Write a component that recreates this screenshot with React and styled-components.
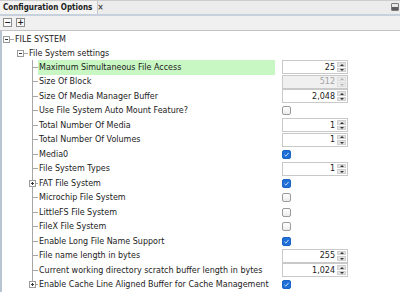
import React from 'react';
import styled, { createGlobalStyle, css } from 'styled-components';

const GlobalStyle = createGlobalStyle`
  html, body {
    margin: 0;
    padding: 0;
    background: #ffffff;
  }
  body {
    font-family: "DejaVu Sans", Verdana, sans-serif;
    font-size: 8px;
    color: #1b1b1b;
  }
`;

const Frame = styled.div`
  width: 400px;
  height: 292px;
  overflow: hidden;
  display: flex;
  flex-direction: column;
  background: #ffffff;
`;

const TabStrip = styled.div`
  height: 13px;
  display: flex;
  align-items: stretch;
  justify-content: space-between;
  background: #ececec;
  border-top: 1px solid #cdcdcd;
  border-bottom: 2px solid #c6d1dd;
`;

const Tab = styled.div`
  display: flex;
  align-items: center;
  gap: 5px;
  padding: 0 3px 0 3px;
  width: 91px;
  background: #f3f3f3;
  border-right: 1px solid #c8c8c8;
  font-family: "DejaVu Sans Condensed", "DejaVu Sans", sans-serif;
  font-weight: bold;
  font-size: 8px;
  color: #222;
  white-space: nowrap;
`;

const CloseMark = styled.span`
  font-size: 8px;
  font-weight: bold;
  color: #444;
`;

const WindowButton = styled.div`
  align-self: center;
  margin-right: 1px;
  width: 6px;
  height: 6px;
  border: 1px solid #7a7a7a;
  background: linear-gradient(#e8e8e8 0 55%, #5c5c5c 55% 100%);
  border-radius: 1px;
`;

const Toolbar = styled.div`
  height: 15px;
  display: flex;
  align-items: center;
  gap: 4px;
  padding-left: 3px;
  background: #f0f0f0;
  border-bottom: 1px solid #c3c3c3;
`;

const ToolButton = styled.div`
  width: 7px;
  height: 7px;
  border: 1px solid #8c8c8c;
  background: #fafafa;
  display: flex;
  align-items: center;
  justify-content: center;
  font-size: 8px;
  line-height: 1;
  font-weight: bold;
  color: #222;
`;

const TreePanel = styled.div`
  flex: 1;
  border-left: 2px solid #b7c5d3;
  padding-top: 2px;
  display: flex;
  flex-direction: column;
`;

const GroupRow = styled.div`
  height: 13.5px;
  display: flex;
  align-items: center;
  padding-left: ${(p) => p.indent}px;
  white-space: nowrap;
`;

const ExpandBox = styled.span`
  box-sizing: border-box;
  width: 7px;
  height: 7px;
  border: 1px solid #9a9a9a;
  background: #ffffff;
  position: relative;
  flex: none;
  &::before {
    content: '';
    position: absolute;
    left: 1px;
    top: 2px;
    width: 3px;
    height: 1px;
    background: #333;
  }
  ${(p) =>
    p.closed &&
    css`
      &::after {
        content: '';
        position: absolute;
        left: 2px;
        top: 1px;
        width: 1px;
        height: 3px;
        background: #333;
      }
    `}
`;

const Dash = styled.span`
  width: 4px;
  height: 1px;
  background: #a6a6a6;
  margin-right: 1px;
  flex: none;
`;

const Row = styled.div`
  height: 14.5px;
  display: grid;
  grid-template-columns: 36px 237px 7px 1fr;
  align-items: stretch;
`;

const Branch = styled.div`
  position: relative;
  background:
    linear-gradient(#a6a6a6, #a6a6a6) 30px 0 / 1px ${(p) => (p.last ? '50%' : '100%')} no-repeat,
    linear-gradient(#a6a6a6, #a6a6a6) 30px 50% / 6px 1px no-repeat;
  display: flex;
  align-items: center;
  padding-left: 27px;
`;

const Label = styled.div`
  display: flex;
  align-items: center;
  padding-left: 1px;
  white-space: nowrap;
  background: ${(p) => (p.highlight ? '#c9f7c4' : 'transparent')};
`;

const ValueCell = styled.div`
  display: flex;
  align-items: center;
`;

const Spinner = styled.div`
  box-sizing: border-box;
  width: 66px;
  height: 14px;
  display: flex;
  border: 1px solid #c9c9c9;
  background: ${(p) => (p.disabled ? '#f0f0f0' : '#ffffff')};
`;

const SpinValue = styled.div`
  flex: 1;
  display: flex;
  align-items: center;
  justify-content: flex-end;
  padding-right: 2px;
  color: ${(p) => (p.disabled ? '#a3a3a3' : '#1b1b1b')};
`;

const SpinButtons = styled.div`
  width: 9px;
  margin: 1px 1px 1px 0;
  display: flex;
  flex-direction: column;
  gap: 1px;
`;

const SpinButton = styled.div`
  flex: 1;
  background: ${(p) => (p.disabled ? '#ececec' : '#e2e2e2')};
  border: 1px solid ${(p) => (p.disabled ? '#dedede' : '#cfcfcf')};
  display: flex;
  align-items: center;
  justify-content: center;
  &::before {
    content: '';
    width: 0;
    height: 0;
    border-left: 2px solid transparent;
    border-right: 2px solid transparent;
    ${(p) =>
      p.down
        ? css`border-top: 2px solid ${p.disabled ? '#b5b5b5' : '#333'};`
        : css`border-bottom: 2px solid ${p.disabled ? '#b5b5b5' : '#333'};`}
  }
`;

const Checkbox = styled.div`
  box-sizing: border-box;
  width: 9px;
  height: 9px;
  border-radius: 2px;
  border: 1px solid ${(p) => (p.checked ? '#1a64c8' : '#9b9b9b')};
  background: ${(p) => (p.checked ? '#1f6fd6' : 'linear-gradient(#ffffff, #ececec)')};
  display: flex;
  align-items: center;
  justify-content: center;
`;

const CheckMark = () => (
  <svg width="7" height="7" viewBox="0 0 7 7">
    <path d="M1.5 3.8 L2.9 5.1 L5.6 1.9" fill="none" stroke="#dbe9ff" strokeWidth="0.9" />
  </svg>
);

const Spin = ({ value, disabled }) => (
  <Spinner disabled={disabled}>
    <SpinValue disabled={disabled}>{value}</SpinValue>
    <SpinButtons>
      <SpinButton disabled={disabled} />
      <SpinButton disabled={disabled} down />
    </SpinButtons>
  </Spinner>
);

const options = [
  { label: 'Maximum Simultaneous File Access', spin: '25', highlight: true },
  { label: 'Size Of Block', spin: '512', disabled: true },
  { label: 'Size Of Media Manager Buffer', spin: '2,048' },
  { label: 'Use File System Auto Mount Feature?', check: false },
  { label: 'Total Number Of Media', spin: '1' },
  { label: 'Total Number Of Volumes', spin: '1' },
  { label: 'Media0', check: true },
  { label: 'File System Types', spin: '1' },
  { label: 'FAT File System', check: true, expandable: true },
  { label: 'Microchip File System', check: false },
  { label: 'LittleFS File System', check: false },
  { label: 'FileX File System', check: false },
  { label: 'Enable Long File Name Support', check: true },
  { label: 'File name length in bytes', spin: '255' },
  { label: 'Current working directory scratch buffer length in bytes', spin: '1,024' },
  { label: 'Enable Cache Line Aligned Buffer for Cache Management', check: true, expandable: true },
];

export default function App() {
  return (
    <Frame>
      <GlobalStyle />
      <TabStrip>
        <Tab>
          Configuration Options <CloseMark>×</CloseMark>
        </Tab>
        <WindowButton />
      </TabStrip>
      <Toolbar>
        <ToolButton>−</ToolButton>
        <ToolButton>+</ToolButton>
      </Toolbar>
      <TreePanel>
        <GroupRow indent={1}>
          <ExpandBox />
          <Dash />
          FILE SYSTEM
        </GroupRow>
        <GroupRow indent={15}>
          <ExpandBox />
          <Dash />
          File System settings
        </GroupRow>
        {options.map((o, i) => (
          <Row key={o.label}>
            <Branch last={i === options.length - 1}>
              {o.expandable && <ExpandBox closed />}
            </Branch>
            <Label highlight={o.highlight}>{o.label}</Label>
            <span />
            <ValueCell>
              {o.spin !== undefined ? (
                <Spin value={o.spin} disabled={o.disabled} />
              ) : (
                <Checkbox checked={o.check}>{o.check && <CheckMark />}</Checkbox>
              )}
            </ValueCell>
          </Row>
        ))}
      </TreePanel>
    </Frame>
  );
}
